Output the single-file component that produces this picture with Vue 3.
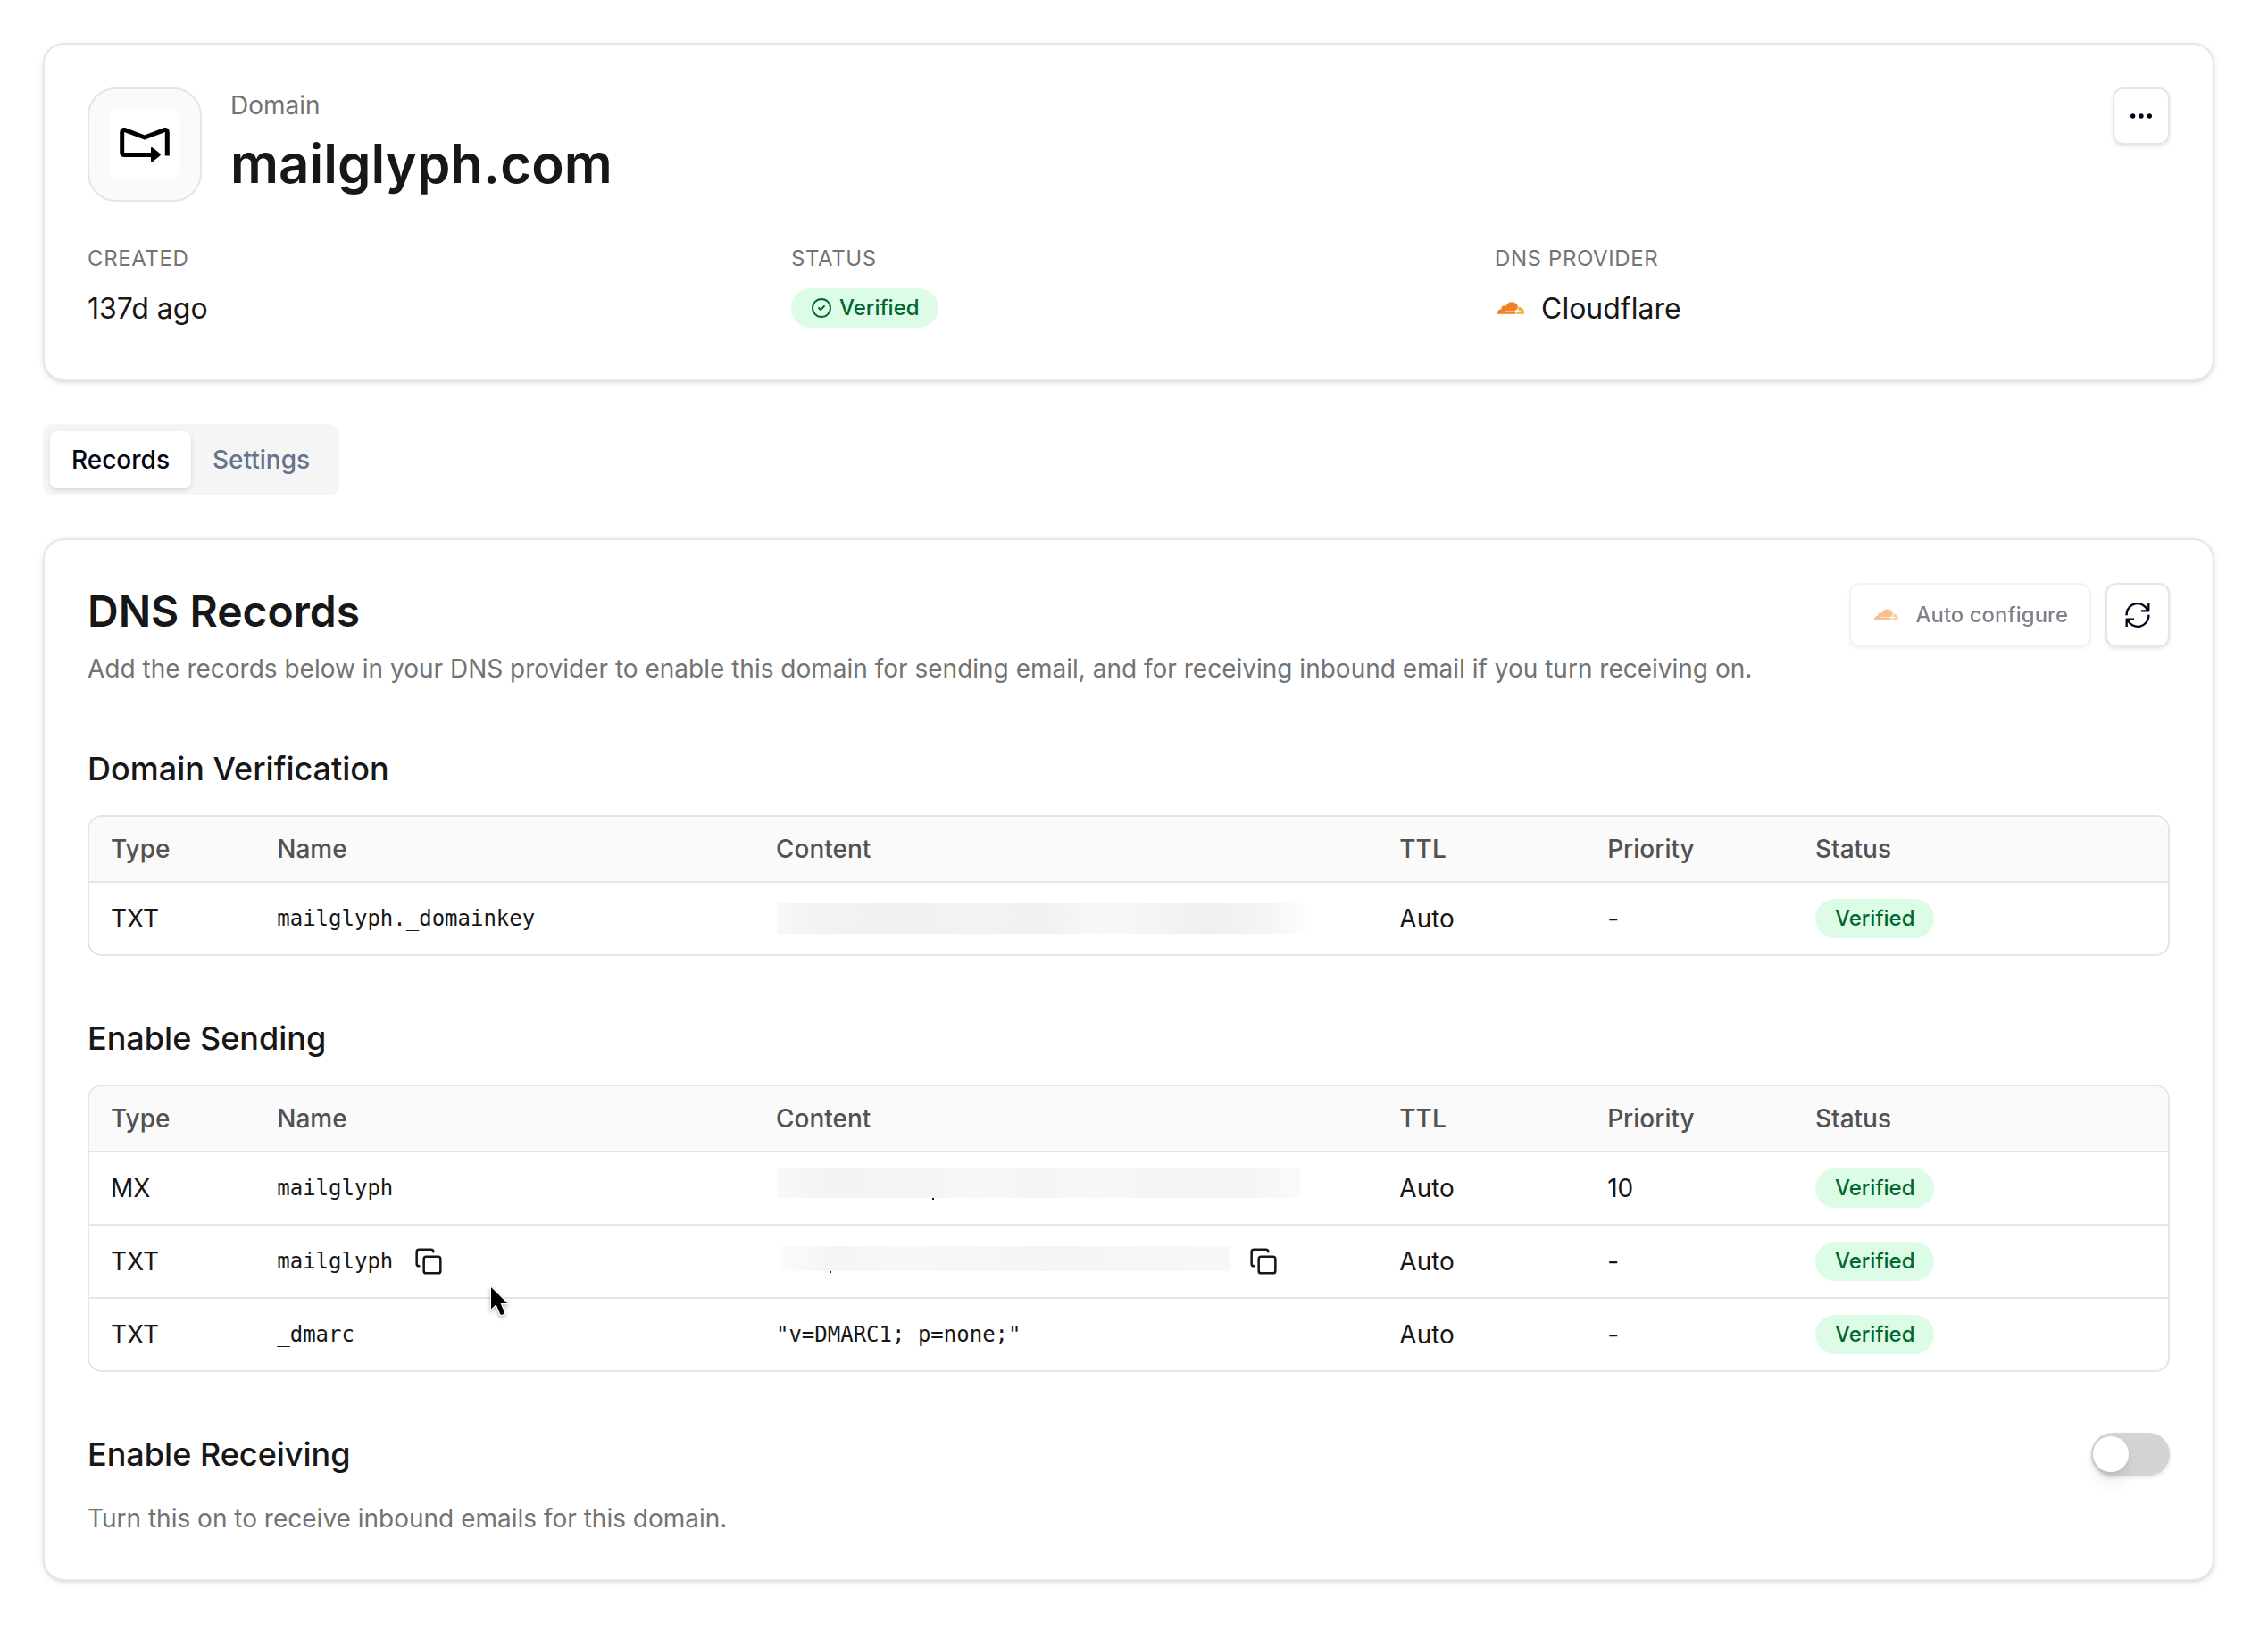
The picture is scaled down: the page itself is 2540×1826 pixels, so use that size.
<template>
  <main class="page">
    <section class="card summary">
      <header class="summary-head">
        <div class="logo">
          <div class="logo-tile">
            <svg class="logo-mark" viewBox="0 0 56 38">
              <path d="M53.3 31.5V5.2c0-2.4-1.9-3.4-3.9-2.4L28 11 6.6 2.8c-2-1-3.9 0-3.9 2.4V28c0 1.6 1 2.6 2.6 2.6H37" fill="none" stroke="#000" stroke-width="5" stroke-linejoin="round" />
              <path d="M35 23.2c0-1.4 1-1.7 2-.8l8.2 6.6c1 .8 1 1.6 0 2.4L37 38c-1 .8-2 .4-2-.9z" fill="#000" />
            </svg>
          </div>
        </div>
        <div class="title-block">
          <p class="eyebrow">Domain</p>
          <h1>mailglyph.com</h1>
        </div>
        <button class="btn btn-more" aria-label="More">
          <svg class="icon-32" viewBox="0 0 24 24" fill="currentColor">
            <circle cx="5" cy="12" r="2" />
            <circle cx="12" cy="12" r="2" />
            <circle cx="19" cy="12" r="2" />
          </svg>
        </button>
      </header>

      <dl class="stats">
        <div>
          <dt>Created</dt>
          <dd>137d ago</dd>
        </div>
        <div>
          <dt>Status</dt>
          <dd>
            <span class="badge">
              <svg class="badge-icon" viewBox="0 0 24 24" fill="none" stroke="currentColor" stroke-width="1.9" stroke-linecap="round" stroke-linejoin="round">
                <circle cx="12" cy="12" r="10" />
                <path d="m9 12 2 2 4-4" />
              </svg>
              Verified
            </span>
          </dd>
        </div>
        <div>
          <dt>DNS Provider</dt>
          <dd class="provider">
            <svg class="cloud" viewBox="0 0 256 116">
              <path v-for="p in cloudPaths" :key="p.fill" :d="p.d" :fill="p.fill" />
            </svg>
            Cloudflare
          </dd>
        </div>
      </dl>
    </section>

    <nav class="tabs">
      <button
        v-for="t in tabs"
        :key="t"
        class="tab"
        :class="{ active: t === activeTab }"
        @click="activeTab = t"
      >{{ t }}</button>
    </nav>

    <section class="card records">
      <header class="records-head">
        <div>
          <h2>DNS Records</h2>
          <p class="muted">Add the records below in your DNS provider to enable this domain for sending email, and for receiving inbound email if you turn receiving on.</p>
        </div>
        <div class="actions">
          <button class="btn btn-auto" disabled>
            <svg class="cloud small" viewBox="0 0 256 116">
              <path v-for="p in cloudPaths" :key="p.fill" :d="p.d" :fill="p.fill" />
            </svg>
            Auto configure
          </button>
          <button class="btn btn-refresh" aria-label="Refresh">
            <svg class="icon-30" viewBox="0 0 30 30" fill="none" stroke="currentColor" stroke-width="2.3">
              <path d="M2.6 15.3A12.3 12.3 0 0 1 26.4 10.2M27.3 2v8.4H19" stroke-linejoin="round" />
              <path d="M27.4 14.7A12.3 12.3 0 0 1 3.6 19.8M2.7 28v-8.4H11" stroke-linejoin="round" />
            </svg>
          </button>
        </div>
      </header>

      <div v-for="g in groups" :key="g.title" class="group">
        <h3>{{ g.title }}</h3>
        <div class="table-wrap">
          <table>
            <colgroup>
              <col class="c-type" />
              <col class="c-name" />
              <col class="c-content" />
              <col class="c-ttl" />
              <col class="c-priority" />
              <col />
            </colgroup>
            <thead>
              <tr>
                <th v-for="h in headers" :key="h">{{ h }}</th>
              </tr>
            </thead>
            <tbody>
              <tr v-for="(r, i) in g.rows" :key="i">
                <td>{{ r.type }}</td>
                <td>
                  <div class="copyable">
                    <code>{{ r.name }}</code>
                    <svg v-if="r.copy" class="icon-32" viewBox="0 0 24 24" fill="none" stroke="currentColor" stroke-width="1.9" stroke-linecap="round" stroke-linejoin="round">
                      <rect width="14" height="14" x="8" y="8" rx="2" />
                      <path d="M4 16c-1.1 0-2-.9-2-2V4c0-1.1.9-2 2-2h10c1.1 0 2 .9 2 2" />
                    </svg>
                  </div>
                </td>
                <td>
                  <div class="copyable">
                    <code v-if="r.content">{{ r.content }}</code>
                    <span v-else class="redacted" :class="r.mask"></span>
                    <svg v-if="r.copy" class="icon-32" viewBox="0 0 24 24" fill="none" stroke="currentColor" stroke-width="1.9" stroke-linecap="round" stroke-linejoin="round">
                      <rect width="14" height="14" x="8" y="8" rx="2" />
                      <path d="M4 16c-1.1 0-2-.9-2-2V4c0-1.1.9-2 2-2h10c1.1 0 2 .9 2 2" />
                    </svg>
                  </div>
                </td>
                <td>Auto</td>
                <td>{{ r.priority }}</td>
                <td><span class="badge">Verified</span></td>
              </tr>
            </tbody>
          </table>
        </div>
      </div>

      <div class="receiving">
        <div class="receiving-row">
          <h3>Enable Receiving</h3>
          <button class="switch" role="switch" :aria-checked="receiving" @click="receiving = !receiving">
            <span class="thumb" :class="{ on: receiving }"></span>
          </button>
        </div>
        <p class="muted">Turn this on to receive inbound emails for this domain.</p>
      </div>
    </section>

    <svg class="cursor" viewBox="0 0 26 40">
      <path d="M3 3v24.5l5.6-5.2 4.3 10.3c.5 1.2 1.4 1.6 2.5 1.1l1.5-.7c1.1-.5 1.4-1.4.9-2.5L13.6 21h7.6z" fill="#000" stroke="#fff" stroke-width="2.4" stroke-linejoin="round" paint-order="stroke" />
    </svg>
  </main>
</template>

<script setup>
import { ref } from "vue"

const tabs = ["Records", "Settings"]
const activeTab = ref("Records")
const receiving = ref(false)

const headers = ["Type", "Name", "Content", "TTL", "Priority", "Status"]

const groups = [
  {
    title: "Domain Verification",
    rows: [
      { type: "TXT", name: "mailglyph._domainkey", mask: "mask-key", priority: "-" }
    ]
  },
  {
    title: "Enable Sending",
    rows: [
      { type: "MX", name: "mailglyph", mask: "mask-mx", priority: "10" },
      { type: "TXT", name: "mailglyph", mask: "mask-spf", priority: "-", copy: true },
      { type: "TXT", name: "_dmarc", content: '"v=DMARC1; p=none;"', priority: "-" }
    ]
  }
]

const cloudPaths = [
  {
    fill: "#fff",
    d: "m202.357 49.394-5.311-2.124C172.085 103.434 72.786 69.289 66.81 85.997c-.996 11.286 54.227 2.146 93.706 4.059 12.039.583 18.076 9.671 12.964 24.484l10.069.031c11.615-36.209 48.683-17.73 50.232-29.68-2.545-7.857-42.601 0-31.425-35.497Z"
  },
  {
    fill: "#f4811f",
    d: "M176.332 108.348c1.593-5.31 1.062-10.622-1.593-13.809-2.656-3.187-6.374-5.31-11.154-5.842L71.17 87.634c-.531 0-1.062-.53-1.593-.53-.531-.532-.531-1.063 0-1.594.531-1.062 1.062-1.594 2.124-1.594l92.946-1.062c11.154-.53 22.839-9.56 27.087-20.182l5.312-13.809c0-.532.531-1.063 0-1.594C191.203 20.182 166.772 0 138.091 0 111.535 0 88.697 16.995 80.73 40.896c-5.311-3.718-11.684-5.843-19.12-5.31-12.747 1.061-22.838 11.683-24.432 24.43-.531 3.187 0 6.374.532 9.56C16.996 70.107 0 87.103 0 108.348c0 2.124 0 3.718.531 5.842 0 1.063 1.062 1.594 1.594 1.594h170.489c1.062 0 2.125-.53 2.125-1.594l1.593-5.842Z"
  },
  {
    fill: "#faad3f",
    d: "M205.544 48.863h-2.656c-.531 0-1.062.53-1.593 1.062l-3.718 12.747c-1.593 5.31-1.062 10.623 1.594 13.809 2.655 3.187 6.373 5.31 11.153 5.843l19.652 1.062c.53 0 1.062.53 1.593.53.53.532.53 1.063 0 1.594-.531 1.063-1.062 1.594-2.125 1.594l-20.182 1.062c-11.154.53-22.838 9.56-27.087 20.182l-1.063 4.78c-.531.532 0 1.594 1.063 1.594h70.108c1.062 0 1.593-.531 1.593-1.593 1.062-4.25 2.124-9.03 2.124-13.81 0-27.618-22.838-50.456-50.456-50.456"
  }
]
</script>

<style>
body {
  background: #fff;
}
</style>

<style scoped>
.page {
  position: relative;
  box-sizing: border-box;
  width: 2540px;
  height: 1826px;
  padding: 48px 60px 0 48px;
  font-family: Inter, sans-serif;
  font-size: 28px;
  line-height: 40px;
  color: #171717;
}

.page * {
  box-sizing: border-box;
}

h1, h2, h3, p, dl, dt, dd {
  margin: 0;
}

button {
  font-family: inherit;
  margin: 0;
  border: none;
}

svg {
  display: block;
  flex-shrink: 0;
}

.icon-32 { width: 32px; height: 32px; }
.icon-30 { width: 30px; height: 30px; }

.card {
  background: #fff;
  border: 2px solid #e5e7eb;
  border-radius: 24px;
  padding: 48px;
  box-shadow: 0 2px 6px rgba(15, 23, 42, 0.1), 0 2px 3px -1px rgba(15, 23, 42, 0.08);
}

/* Summary card */
.summary {
  height: 379px;
}

.summary-head {
  display: flex;
  align-items: flex-start;
  gap: 32px;
}

.logo {
  display: flex;
  align-items: center;
  justify-content: center;
  width: 128px;
  height: 128px;
  border: 2px solid #e5e5e5;
  border-radius: 32px;
  background: #fafafa;
}

.logo-tile {
  display: flex;
  align-items: center;
  justify-content: center;
  width: 80px;
  height: 80px;
  border-radius: 12px;
  background: #fff;
}

.logo-mark {
  width: 56px;
  height: 38px;
}

.title-block {
  flex: 1;
}

.eyebrow {
  color: #737373;
}

h1 {
  margin-top: 9px;
  font-size: 60px;
  line-height: 72px;
  font-weight: 600;
}

.btn {
  display: flex;
  align-items: center;
  justify-content: center;
  background: #fff;
  border: 2px solid #e2e8f0;
  border-radius: 12px;
  color: #020617;
  box-shadow: 0 2px 4px rgba(0, 0, 0, 0.1);
  padding: 0;
}

.btn-more {
  width: 64px;
  height: 64px;
}

.stats {
  display: grid;
  grid-template-columns: repeat(3, 1fr);
  gap: 32px;
  margin-top: 48px;
}

dt {
  font-size: 24px;
  line-height: 32px;
  letter-spacing: 0.6px;
  text-transform: uppercase;
  color: #737373;
}

dd {
  display: flex;
  align-items: center;
  height: 48px;
  margin-top: 16px;
  font-size: 32px;
  line-height: 48px;
}

dd .badge,
dd .cloud {
  margin-bottom: 2px;
}

.provider {
  gap: 19px;
  padding-left: 3px;
}

.cloud {
  width: 30px;
  height: 14px;
}

.cloud.small {
  width: 27px;
  height: 13px;
}

.badge {
  display: inline-flex;
  align-items: center;
  gap: 8px;
  height: 44px;
  padding: 0 21px 0 22px;
  border-radius: 22px;
  background: #dcfce7;
  color: #016630;
  font-size: 24px;
  line-height: 32px;
  font-weight: 500;
  vertical-align: middle;
}

.badge-icon {
  width: 24px;
  height: 24px;
}

/* Tabs */
.tabs {
  display: inline-flex;
  height: 80px;
  margin: 48px 0;
  padding: 8px 9px 8px 8px;
  border-radius: 12px;
  background: #f5f5f5;
  vertical-align: top;
}

.tab {
  padding: 0 24px;
  border-radius: 8px;
  background: transparent;
  color: #64748b;
  font-size: 28px;
  font-weight: 500;
}

.tab.active {
  background: #fff;
  color: #020617;
  box-shadow: 0 2px 5px rgba(0, 0, 0, 0.12);
}

/* Records card */
.records {
  height: 1168px;
}

.records-head {
  display: flex;
  justify-content: space-between;
}

h2 {
  font-size: 48px;
  line-height: 64px;
  font-weight: 600;
}

.muted {
  color: #737373;
}

.records-head .muted {
  margin-top: 12px;
}

.actions {
  display: flex;
  gap: 16px;
}

.btn-auto {
  gap: 19px;
  height: 72px;
  padding: 0 24px 2px 26px;
  font-size: 24px;
  font-weight: 500;
  opacity: 0.5;
}

.btn-refresh {
  width: 72px;
  height: 72px;
}

h3 {
  font-size: 36px;
  line-height: 56px;
  font-weight: 500;
}

.group {
  margin-top: 64px;
}

.table-wrap {
  margin-top: 24px;
  border: 2px solid #e5e5e5;
  border-radius: 16px;
  overflow: hidden;
}

table {
  width: 100%;
  table-layout: fixed;
  border-collapse: separate;
  border-spacing: 0;
}

.c-type { width: 8%; }
.c-name { width: 24%; }
.c-content { width: 30%; }
.c-ttl, .c-priority { width: 10%; }

th, td {
  padding: 0 24px;
  text-align: left;
  font-size: 28px;
  line-height: 40px;
}

th {
  height: 74px;
  background: #fafafa;
  border-bottom: 2px solid #e5e5e5;
  color: #525252;
  font-weight: 500;
}

td {
  height: 82px;
  border-bottom: 2px solid #e5e5e5;
}

tr:last-child td {
  height: 80px;
  border-bottom: none;
}

.copyable {
  display: flex;
  align-items: center;
  gap: 24px;
}

code {
  font-family: "DejaVu Sans Mono", monospace;
  font-size: 24px;
  line-height: 32px;
}

/* Smudged-out record values */
.redacted {
  position: relative;
  width: 586px;
  height: 34px;
  margin-left: 1px;
}

.mask-key {
  background: linear-gradient(90deg, #f8f8f8, #f3f3f3 6%, #f0f0f0 24%, #f3f3f3 38%, #f0f0f0 50%, #f8f8f8 61%, #f5f5f5 70%, #efefef 81%, #f4f4f4 92%, #fdfdfd);
  width: 592px;
}

.mask-mx {
  top: -6px;
  background: linear-gradient(90deg, #f9f9f9, #f3f3f3 10%, #f5f5f5 30%, #f8f8f8 37%, #f5f5f5 50%, #f8f8f8 61%, #f4f4f4 75%, #f5f5f5 90%, #fafafa);
}

.mask-spf {
  top: -3px;
  width: 504px;
  height: 28px;
  margin-left: 5px;
  background: linear-gradient(90deg, #fbfbfb, #f5f5f5 12%, #f8f8f8 26%, #f5f5f5 60%, #f8f8f8);
}

/* descender tip that sticks out below the smudge */
.mask-mx::after,
.mask-spf::after {
  content: "";
  position: absolute;
  top: 100%;
  left: 174px;
  width: 2px;
  height: 2px;
  background: #171717;
}

.mask-spf::after {
  left: 55px;
}

.mask-spf + svg {
  margin-left: -3px;
}

/* Receiving */
.receiving {
  margin-top: 64px;
}

.receiving-row {
  display: flex;
  align-items: center;
  justify-content: space-between;
}

.receiving .muted {
  margin-top: 24px;
}

.switch {
  width: 88px;
  height: 48px;
  padding: 4px 2px;
  border-radius: 24px;
  background: #d4d4d4;
  box-shadow: 0 2px 4px rgba(0, 0, 0, 0.12);
}

.thumb {
  display: block;
  width: 40px;
  height: 40px;
  border-radius: 50%;
  background: #fff;
  box-shadow: 0 16px 20px -4px rgba(0, 0, 0, 0.08), 0 4px 8px rgba(0, 0, 0, 0.06);
}

.thumb.on {
  margin-left: 44px;
}

.cursor {
  position: absolute;
  left: 547px;
  top: 1439px;
  width: 26px;
  height: 40px;
  filter: drop-shadow(0 2px 2px rgba(0, 0, 0, 0.3));
}
</style>
